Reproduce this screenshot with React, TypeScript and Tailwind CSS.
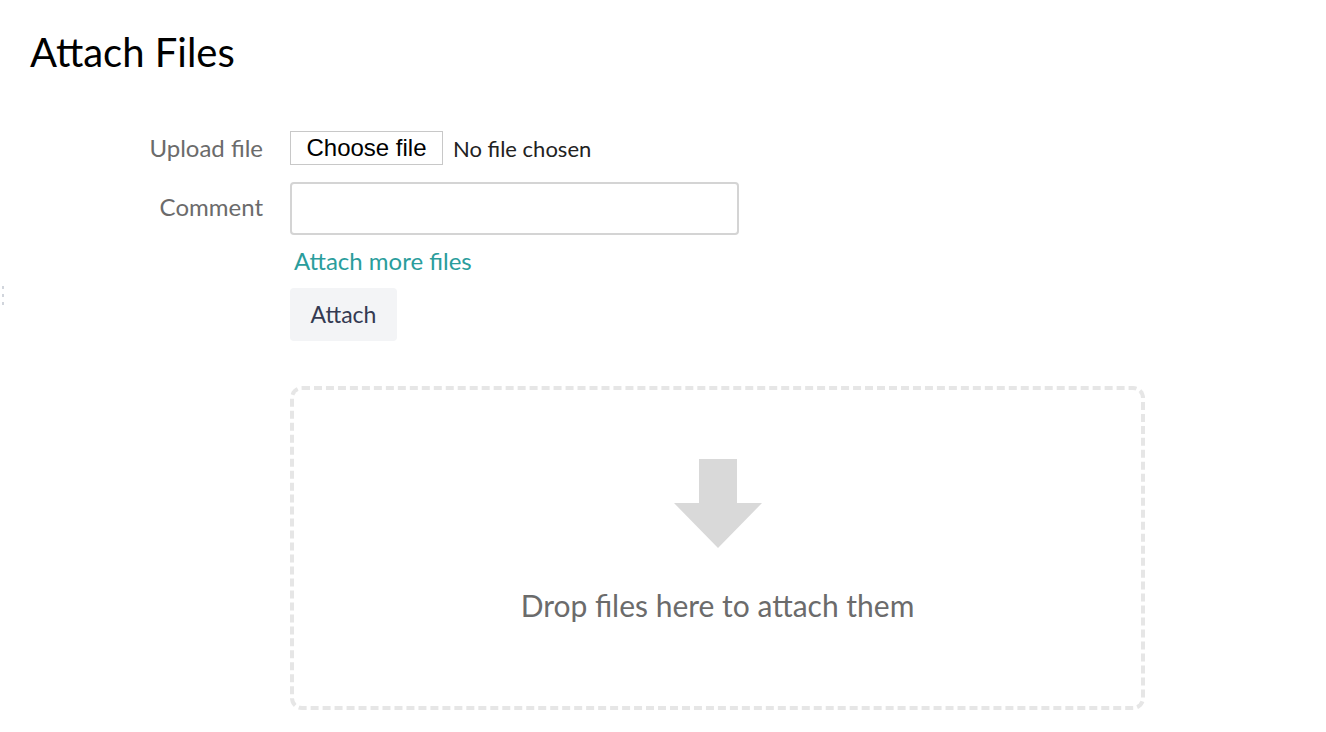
import React from 'react';

// Attach files form with drop zone

function DownArrow() {
  return (
    <svg width="88" height="89" viewBox="0 0 88 89" className="block">
      <path d="M25 0 H63 V44 H88 L44 89 L0 44 H25 Z" fill="#d9d9d9" />
    </svg>
  );
}

export default function App() {
  return (
    <div className="relative min-h-[732px] bg-white text-black" style={{ fontFamily: 'Lato, "Noto Sans", sans-serif' }}>
      {/* little grip on the left edge */}
      <div className="absolute left-[2px] top-[286px] flex flex-col gap-[5px]">
        <span className="block h-[3px] w-[2px] bg-gray-300" />
        <span className="block h-[3px] w-[2px] bg-gray-300" />
        <span className="block h-[3px] w-[2px] bg-gray-300" />
      </div>

      <div className="px-[30px] pt-[27px]">
        <h1 className="text-[40px] leading-[50px] font-normal">Attach Files</h1>
      </div>

      <div className="mt-[54px] grid grid-cols-[263px_1fr] gap-x-[27px]">
        <label className="flex h-[34px] items-center justify-end text-[24px] text-[#6b6b6b]">Upload file</label>
        <div className="flex h-[34px] items-center">
          <span
            className="flex h-[34px] w-[153px] items-center justify-center border border-[#c8c8c8] bg-white text-[24px] text-black"
            style={{ fontFamily: '"Liberation Sans", Arial, sans-serif' }}
          >
            Choose file
          </span>
          <span className="ml-[10px] text-[22px] text-[#222]">No file chosen</span>
        </div>

        <label className="mt-[17px] flex h-[53px] items-center justify-end text-[24px] text-[#6b6b6b]">
          <span className="-mt-[3px]">Comment</span>
        </label>
        <div className="mt-[17px]">
          <input className="block h-[53px] w-[449px] rounded-[4px] border-2 border-[#d4d4d4] bg-white px-3 outline-none" />
        </div>

        <div />
        <div className="mt-[10px]">
          <a className="ml-[4px] text-[24px] leading-[32px] text-[#2a9d9c]">Attach more files</a>
        </div>

        <div />
        <div className="mt-[11px]">
          <button className="h-[53px] w-[107px] rounded-[4px] bg-[#f3f4f6] text-[23px] text-[#343a52]">Attach</button>
        </div>

        <div />
        <div className="mt-[45px]">
          <div className="flex h-[324px] w-[855px] flex-col items-center rounded-[12px] border-4 border-dashed border-[#e6e6e6]">
            <div className="mt-[69px]">
              <DownArrow />
            </div>
            <p className="mt-[35px] text-[30px] text-[#6b6b6b]">Drop files here to attach them</p>
          </div>
        </div>
      </div>
    </div>
  );
}
